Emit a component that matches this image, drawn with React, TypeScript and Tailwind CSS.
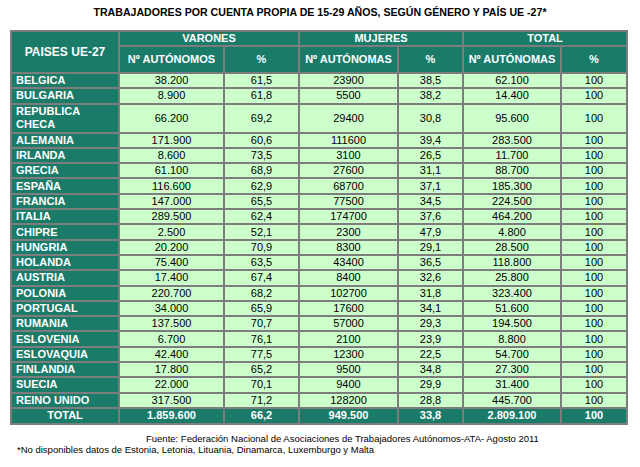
import React from 'react';

type Row = [string, string, string, string, string, string, string];

const rows: Row[] = [
  ['BELGICA', '38.200', '61,5', '23900', '38,5', '62.100', '100'],
  ['BULGARIA', '8.900', '61,8', '5500', '38,2', '14.400', '100'],
  ['REPUBLICA CHECA', '66.200', '69,2', '29400', '30,8', '95.600', '100'],
  ['ALEMANIA', '171.900', '60,6', '111600', '39,4', '283.500', '100'],
  ['IRLANDA', '8.600', '73,5', '3100', '26,5', '11.700', '100'],
  ['GRECIA', '61.100', '68,9', '27600', '31,1', '88.700', '100'],
  ['ESPAÑA', '116.600', '62,9', '68700', '37,1', '185.300', '100'],
  ['FRANCIA', '147.000', '65,5', '77500', '34,5', '224.500', '100'],
  ['ITALIA', '289.500', '62,4', '174700', '37,6', '464.200', '100'],
  ['CHIPRE', '2.500', '52,1', '2300', '47,9', '4.800', '100'],
  ['HUNGRIA', '20.200', '70,9', '8300', '29,1', '28.500', '100'],
  ['HOLANDA', '75.400', '63,5', '43400', '36,5', '118.800', '100'],
  ['AUSTRIA', '17.400', '67,4', '8400', '32,6', '25.800', '100'],
  ['POLONIA', '220.700', '68,2', '102700', '31,8', '323.400', '100'],
  ['PORTUGAL', '34.000', '65,9', '17600', '34,1', '51.600', '100'],
  ['RUMANIA', '137.500', '70,7', '57000', '29,3', '194.500', '100'],
  ['ESLOVENIA', '6.700', '76,1', '2100', '23,9', '8.800', '100'],
  ['ESLOVAQUIA', '42.400', '77,5', '12300', '22,5', '54.700', '100'],
  ['FINLANDIA', '17.800', '65,2', '9500', '34,8', '27.300', '100'],
  ['SUECIA', '22.000', '70,1', '9400', '29,9', '31.400', '100'],
  ['REINO UNIDO', '317.500', '71,2', '128200', '28,8', '445.700', '100'],
];

const total: Row = ['TOTAL', '1.859.600', '66,2', '949.500', '33,8', '2.809.100', '100'];

const cell = 'border-2 border-[#7d7d7d] p-0';

export default function App() {
  return (
    <div className="w-[640px] h-[467px] bg-white font-['Liberation_Sans',Arial,sans-serif] text-[11px] leading-none text-black">
      <h1 className="pt-[7px] h-[30px] text-center font-bold text-[10.6px]">
        TRABAJADORES POR CUENTA PROPIA DE 15-29 AÑOS, SEGÚN GÉNERO Y PAÍS UE -27*
      </h1>

      <table className="ml-[10px] w-[616px] table-fixed border-collapse border-2 border-[#7d7d7d]">
        <colgroup>
          <col className="w-[108px]" />
          <col className="w-[105px]" />
          <col className="w-[75px]" />
          <col className="w-[99px]" />
          <col className="w-[65px]" />
          <col className="w-[98px]" />
          <col className="w-[66px]" />
        </colgroup>
        <thead className="bg-[#1a7b69] text-white font-bold">
          <tr className="h-[15px]">
            <th rowSpan={2} className={`${cell} text-[12px]`}>PAISES UE-27</th>
            <th colSpan={2} className={cell}>VARONES</th>
            <th colSpan={2} className={cell}>MUJERES</th>
            <th colSpan={2} className={cell}>TOTAL</th>
          </tr>
          <tr className="h-[27px]">
            <th className={cell}>Nº AUTÓNOMOS</th>
            <th className={cell}>%</th>
            <th className={cell}>Nº AUTÓNOMAS</th>
            <th className={cell}>%</th>
            <th className={cell}>Nº AUTÓNOMAS</th>
            <th className={cell}>%</th>
          </tr>
        </thead>
        <tbody>
          {rows.map((r) => (
            <tr key={r[0]} className={r[0] === 'REPUBLICA CHECA' ? 'h-[29px]' : 'h-[15.3px]'}>
              <td className={`${cell} bg-[#1a7b69] text-white font-bold text-left pl-[4px] leading-[13px] whitespace-nowrap`}>
                {r[0] === 'REPUBLICA CHECA' ? (
                  <>
                    REPUBLICA
                    <br />
                    CHECA
                  </>
                ) : (
                  r[0]
                )}
              </td>
              {r.slice(1).map((v, i) => (
                <td key={i} className={`${cell} bg-[#ccffcc] text-center`}>
                  {v}
                </td>
              ))}
            </tr>
          ))}
          <tr className="h-[16px] bg-[#1a7b69] text-white font-bold">
            {total.map((v, i) => (
              <td key={i} className={`${cell} text-center`}>
                {v}
              </td>
            ))}
          </tr>
        </tbody>
      </table>

      <div className="mt-[8px] text-[9.5px] leading-[11px]">
        <p className="pl-[146px]">Fuente: Federación Nacional de Asociaciones de Trabajadores Autónomos-ATA- Agosto 2011</p>
        <p className="pl-[17px]">*No disponibles datos de Estonia, Letonia, Lituania, Dinamarca, Luxemburgo y Malta</p>
      </div>
    </div>
  );
}
